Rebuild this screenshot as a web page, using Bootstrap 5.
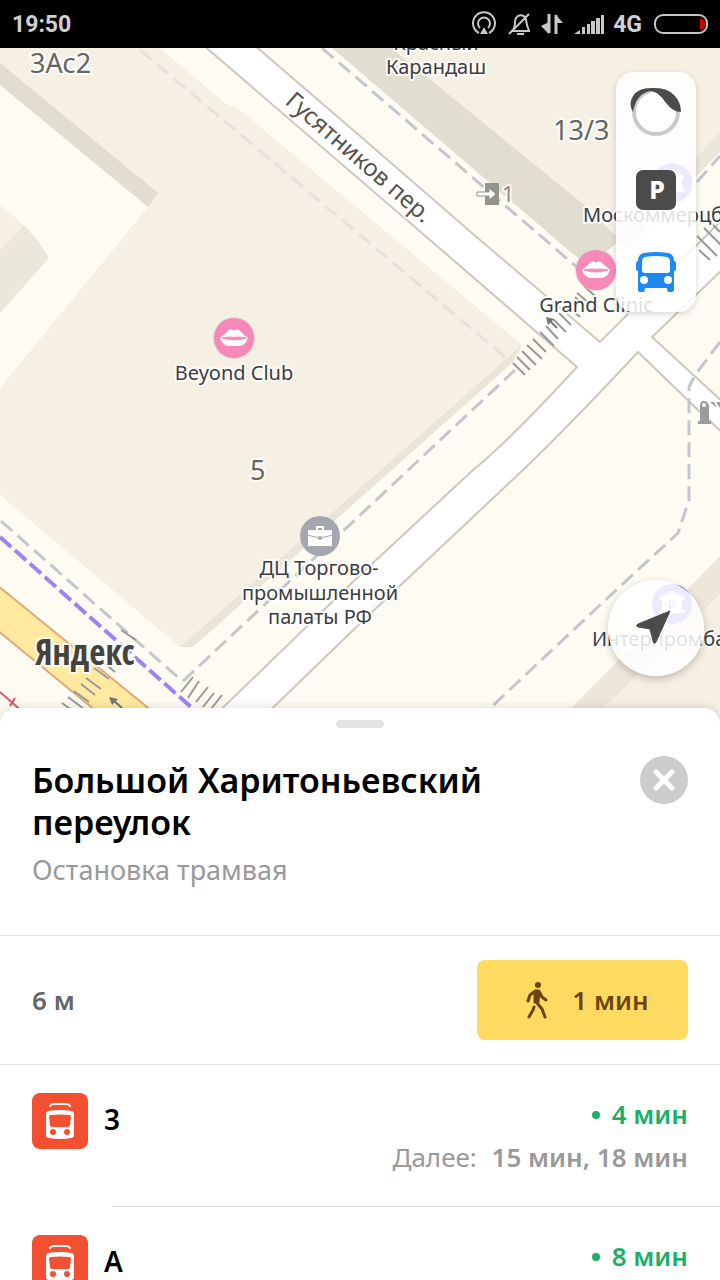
<!DOCTYPE html>
<html lang="ru">
<head>
<meta charset="utf-8">
<meta name="viewport" content="width=device-width, initial-scale=1">
<title>Остановка трамвая</title>
<link href="https://cdn.jsdelivr.net/npm/bootstrap@5.3.0/dist/css/bootstrap.min.css" rel="stylesheet">
<style>
body{font-family:"Noto Sans",sans-serif;background:#fff;color:#000}
.status-bar{height:48px;background:#000;color:#d0d0d0;font:700 23px/48px Roboto,sans-serif;padding:2px 10px 0 12px}
.map-view{background:#fefbf2}
.map-view>svg{display:block;width:100%;height:auto}
.map-label{font-family:"Noto Sans",sans-serif;fill:#3a3d42;paint-order:stroke;stroke:#fff;stroke-opacity:.85;stroke-width:4px;stroke-linejoin:round}
.poi-name{font-size:20px;text-anchor:middle}
.house-no{font-size:27px;fill:#66665f}
.street{font-size:24px;fill:#55544e}
.brand{font:35px "Liberation Sans Narrow","Open Sans Condensed","Noto Sans",sans-serif;fill:#45433f}
.layer-panel{top:24px;right:24px;width:80px;border-radius:18px;background:rgba(255,255,255,.84);box-shadow:0 2px 6px rgba(0,0,0,.16)}
.layer-panel .btn{height:80px;line-height:1}
.locate{right:16px;bottom:48px;width:96px;height:96px;background:rgba(255,255,255,.84);box-shadow:0 3px 8px rgba(0,0,0,.22)}
.sheet{margin-top:-16px;border-radius:16px 16px 0 0;background:#fff;box-shadow:0 -2px 8px rgba(0,0,0,.1)}
.handle{width:48px;height:8px;background:#e3e3e3;margin-top:12px}
.sheet-head{padding:31px 32px 38px}
.stop-name{font-size:34px;line-height:42px;font-weight:600}
.muted{color:#999}
.stop-kind{font-size:27px;line-height:54px}
.close-stop{width:48px;height:48px;background:#ccc;margin-top:-3px}
.line-top{border-top:1px solid #e2e2e2}
.walk-row{padding:24px 32px}
.dist{font-size:26px;font-weight:600;color:#666}
.walk-btn,.walk-btn:hover{width:211px;height:80px;border:0;border-radius:8px;background:#ffda60;color:#6b470f;font-size:26px;font-weight:600;gap:24px}
.route{padding:28px 0 0 32px;gap:16px}
.route svg{width:56px;height:56px}
.route-no{font-size:28px;font-weight:600;line-height:52px}
.route-no a{color:#000}
.times{font-size:26px;line-height:43px;padding-right:32px}
.soon{color:#1bb066;font-weight:600;gap:12px}
.live-dot{width:8px;height:8px;background:#1bb066}
.row-line{margin-left:112px}
.route-list .route{min-height:141px}
</style>
</head>
<body>
<div class="vh-100 d-flex flex-column overflow-hidden">
<header class="status-bar d-flex align-items-center justify-content-between flex-shrink-0">
  <time>19:50</time>
  <div class="d-flex align-items-center">
    <svg width="154" height="48" viewBox="460 1 154 48" fill="none" stroke="#c8c8c8" stroke-width="2" aria-hidden="true">
      <path d="M480 33a11 11 0 1 1 10 0M481 28a6 6 0 1 1 8 0" stroke-width="2"/><path d="M485 27l4 7h-8z" fill="#c8c8c8" stroke="none"/>
      <path d="M512 31h19M514 30c3-4 1-8 3-12 2-3 6-4 9-1 2 3 1 9 4 13M510 34l20-20M518 34h7"/>
      <path d="M550 14v19M557 34V15" stroke-width="3"/><path d="M542 26l8 8V22zM556 14l8 9h-8z" fill="#c8c8c8" stroke="none"/>
      <path d="M575 34l6-4v4zM583 27h3v7h-3zM588 24h3v10h-3zM592 21h4v13h-4zM597 18h4v16h-4zM602 15h3v19h-3z" fill="#c8c8c8" stroke="none"/>
    </svg>
    <span>4G</span>
    <svg class="ms-2" width="60" height="24" viewBox="0 1 60 24" aria-hidden="true"><rect x="5" y="3" width="52" height="18" rx="8" fill="none" stroke="#c4c4c4" stroke-width="2"/><path d="M50 6q5 1 5 6t-5 6z" fill="#d40000"/></svg>
  </div>
</header>

<main class="map-view position-relative flex-shrink-0">
  <svg viewBox="0 48 720 676" role="img" aria-label="Карта">
    <defs>
      <g id="lips"><circle r="21" fill="#d9d2c8" opacity=".7"/><circle r="20" fill="#f789b8"/><path d="M-14 0Q-9-4-5-8-2-10 0-7 2-10 5-8 9-4 14 0 11 8 5 8H-5Q-11 8-14 0z" fill="#fff"/><path d="M-12 0Q-6-1-3-1 0 0 3-1 6-1 12 0 5 2 0 2T-12 0z" fill="#f789b8" stroke="#f789b8"/></g>
      <g id="bank"><circle r="20" fill="#8f7cf0"/><path d="M-12-7L0-13 12-7v3H10V6h3v3h-26V6h3V-4h-2z" fill="#fff"/></g>
    </defs>
    <rect y="48" width="720" height="676" fill="#fefbf2"/>
    <!-- buildings -->
    <path d="M0 48H160L225 103 240 110 360 210 522 345 180 647 0 495V388L148 207 0 80z" fill="#f6efe4"/>
    <path d="M0 63L158 193 148 207 0 85z" fill="#e1ddd1"/>
    <path d="M522 345L513 362 193 647H180z" fill="#e9e5d9"/>
    <path d="M0 205L24 225 0 250z" fill="#f6efe4"/><path d="M24 225L37 240 49 258 0 313V250z" fill="#ebe7db"/>
    <path d="M393 48H720V132L618 240z" fill="#f6efe4"/>
    <path d="M332 48H393L400 55 583 204 620 240 590 266 573 254z" fill="#e1ddd1"/>
    <path d="M720 132L618 240 627 249 720 152z" fill="#ebe7db"/>
    <path d="M720 556L556 724H587L720 594z" fill="#eee6da"/><path d="M720 594L587 724H720z" fill="#f6efe4"/>
    <!-- streets -->
    <path d="M195 38L430 240 577 367Q510 440 473 470L360 575 206 724H256L372 612 523 470Q570 425 638 352L698 410 724 434V403L652 337 724 268V218L600 342 480 240 360 136 246 38z" fill="#fff" stroke="#cdc8bf" stroke-width="2"/>
    <path d="M-3 585L168 724H112L-3 630z" fill="#ffeaa0" stroke="#e3a876" stroke-width="2"/>
    <!-- footpaths -->
    <g fill="none" stroke-width="3">
      <path d="M140 50L505 357" stroke="#e3e3dc" stroke-dasharray="15 7"/>
      <g stroke="#c3c7cb" stroke-dasharray="15 7">
        <path d="M322 48L600 287M515 370L182 682M1 521L182 681M697 182L720 156"/>
        <path d="M720 342L695 375 689 387V500L678 533 600 605 470 727"/>
      </g>
      <path d="M0 537L210 724" stroke="#9c85f0" stroke-width="4" stroke-dasharray="15 5"/>
      <path d="M0 692L32 720M10 706L15 698" stroke="#d8586a" stroke-width="2"/>
    </g>
    <!-- pedestrian crossings -->
    <g stroke="#99999a" stroke-width="2">
      <path d="M513 363l12 12M517 357l13 13M522 351l14 14M527 345l15 14M533 339l13 13M540 332l14 14M546 326l12 13M553 319l13 13M559 313l12 12M566 305l14 12M575 297l12 11"/>
      <path d="M577 293l12 10M584 286l12 11M591 280l10 9"/>
      <path d="M697 236l20 20M704 228l18 18M699 250l11 10M710 222l10 10"/>
      <path d="M181 692l12-15M188 698l11-17M196 702l12-15M203 707l11-14M211 709l11-14"/>
      <path d="M62 703l15 11M68 697l16 12M74 691l15 11M81 684l14 11M86 678l15 11M94 668l15 11M103 662l12 10M121 630l15 10"/>
    </g>
    <path d="M557 328L549 320M122 708L113 700" stroke="#777" stroke-width="2"/><path d="M546 317l8 2-6 6zM109 697l9 2-6 6z" fill="#777"/>
    <!-- entrance and barrier marks -->
    <path d="M485 183h14v22h-14z" fill="#96928c"/><path d="M477 192h12v-4l7 6-7 6v-4h-12z" fill="#fff" stroke="#96928c"/>
    <path d="M698 424h13v-3h-2v-15q-1-5-5-5t-4 5v15h-2zM710 402h4l3 6zM716 402h4v6z" fill="#9b9ca0"/><circle cx="704" cy="405" r="2" fill="#fff"/>
    <use href="#lips" x="234" y="338"/><use href="#lips" x="596" y="270"/>
    <use href="#bank" x="672" y="183"/><use href="#bank" x="672" y="604"/>
    <text x="672" y="610" font-size="14" text-anchor="middle" fill="#8f7cf0">₽</text>
    <circle cx="320" cy="536" r="20" fill="#a4a7af"/>
    <path d="M308 530h8v-4h8v4h8v16h-24z" fill="#fff"/><path d="M318 530v-2h4v2z" fill="#a4a7af"/><path d="M308 535q12 5 24 0" fill="none" stroke="#a4a7af"/><circle cx="320" cy="538" r="2" fill="#a4a7af"/>
    <!-- names -->
    <g class="map-label">
      <text class="house-no" x="30" y="73">3Ас2</text><text class="house-no" x="553" y="140">13/3</text><text class="house-no" x="250" y="480">5</text>
      <text x="502" y="202" font-size="21" fill="#99857c">1</text>
      <text class="street" transform="translate(284 103) rotate(41)">Гусятников пер.</text>
      <g class="poi-name">
        <text x="436" y="50">Красный</text><text x="436" y="74">Карандаш</text>
        <text x="234" y="380">Beyond Club</text><text x="596" y="312">Grand Clinic</text>
        <text x="319" y="575">ДЦ Торгово-</text><text x="320" y="600">промышленной</text><text x="320" y="624">палаты РФ</text>
        <text x="583" y="222" style="text-anchor:start">Москоммерцбанк</text><text x="592" y="646" style="text-anchor:start">Интерпромбанк</text>
      </g>
      <text class="brand" x="35" y="665">Яндекс</text>
    </g>
  </svg>
  <div class="layer-panel position-absolute d-flex flex-column">
    <button class="btn border-0 p-0" aria-label="Пробки"><svg width="54" height="54" viewBox="1 1 54 54"><circle cx="28" cy="28" r="22" fill="#fff" stroke="#c9c9c9" stroke-width="4"/><path d="M5 28Q0 20 5 12 10 4 23 4 39 3 46 11 53 18 53 28 45 28 38 19 30 7 22 7 8 10 5 28z" fill="#4b4b4b"/></svg></button>
    <button class="btn border-0 p-0" aria-label="Парковки"><svg width="40" height="44" viewBox="0 0 40 44"><rect width="40" height="40" rx="7" fill="#4b4b4b"/><text x="21" y="29" text-anchor="middle" font-family="Noto Sans" font-size="25" font-weight="800" fill="#fff">P</text></svg></button>
    <button class="btn border-0 p-0" aria-label="Транспорт"><svg width="40" height="40" viewBox="0 0 40 40"><path d="M2 9Q2 2 8 1 20-1 32 1q6 1 6 8 2 0 2 3v5q0 2-2 2v19q0 2-2 2h-3q-2 0-2-4H9q0 4-2 4H4q-2 0-2-2V19q-2 0-2-2v-5q0-3 2-3z" fill="#1e88f5"/><path d="M9 5q11-2 22 0 3 1 3 5v8q0 3-3 3H9q-3 0-3-3v-8q0-4 3-5z" fill="#fff"/><circle cx="8" cy="28" r="4" fill="#fff"/><circle cx="32" cy="28" r="4" fill="#fff"/></svg></button>
  </div>
  <button class="locate btn border-0 p-0 rounded-circle position-absolute" aria-label="Моё местоположение"><svg width="40" height="40" viewBox="0 0 40 40"><path d="M34 3L20 34q-2 3-3-1l-3-12-12-2q-3-1 0-3z" fill="#4b4b4b" stroke="#4b4b4b" stroke-linejoin="round"/></svg></button>
</main>

<section class="sheet position-relative flex-grow-1">
  <div class="handle rounded-pill mx-auto"></div>
  <div class="sheet-head d-flex justify-content-between align-items-start">
    <div class="col-9">
      <h1 class="stop-name mb-0">Большой Харитоньевский переулок</h1>
      <p class="stop-kind muted mb-0">Остановка трамвая</p>
    </div>
    <button class="close-stop btn border-0 p-0 rounded-circle lh-1" aria-label="Закрыть"><svg width="24" height="24" viewBox="0 0 24 24"><path d="M4 4l16 16M20 4L4 20" stroke="#fff" stroke-width="5" stroke-linecap="round"/></svg></button>
  </div>
  <div class="walk-row line-top d-flex justify-content-between align-items-center">
    <span class="dist">6 м</span>
    <button class="walk-btn btn d-flex align-items-center justify-content-center p-0 ps-2">
      <svg width="24" height="38" viewBox="0 0 24 38" fill="none" stroke="#6b470f" stroke-linecap="round" stroke-linejoin="round"><circle cx="14" cy="4" r="3" fill="#6b470f" stroke="none"/><path d="M11 10h4l-1 11h-3z" fill="#6b470f" stroke-width="3"/><path d="M10 11l-4 3-2 6M16 12l2 4 4 3" stroke-width="3"/><path d="M13 22l5 6 3 8M10 26l-1 3-4 7" stroke-width="3"/></svg>
      <span>1 мин</span>
    </button>
  </div>
  <svg class="d-none"><symbol id="tram" viewBox="0 0 56 56"><rect width="56" height="56" rx="8" fill="#f25030"/><path d="M18 13q1-2 4-2h12q3 0 4 2" fill="none" stroke="#fff" stroke-width="2" stroke-linecap="round"/><path d="M14 21q0-2 2-3 12-2 24 0 2 1 2 3v21q0 3-3 3-11 2-22 0-3 0-3-3z" fill="#fff"/><path d="M17 24q0-2 2-2 9-1 18 0 2 0 2 2l-1 8q0 2-3 2H21q-3 0-3-2z" fill="#f25030"/><circle cx="21" cy="39" r="3" fill="#f25030"/><circle cx="35" cy="39" r="3" fill="#f25030"/></symbol></svg>
  <ul class="route-list list-unstyled mb-0 line-top">
    <li class="route d-flex align-items-start"><svg aria-hidden="true"><use href="#tram"/></svg>
      <span class="route-no"><a href="#r3" class="text-decoration-none">3</a></span>
      <div class="times ms-auto text-end"><div class="soon d-flex align-items-center justify-content-end"><span class="live-dot rounded-circle"></span>4 мин</div><div class="muted">Далее: <span class="fw-semibold ms-2">15 мин, 18 мин</span></div></div></li>
    <li class="row-line line-top"></li>
    <li class="route d-flex align-items-start"><svg aria-hidden="true"><use href="#tram"/></svg>
      <span class="route-no"><a href="#ra" class="text-decoration-none">А</a></span>
      <div class="times ms-auto text-end"><div class="soon d-flex align-items-center justify-content-end"><span class="live-dot rounded-circle"></span>8 мин</div></div></li>
  </ul>
</section>
</div>
<script src="https://cdn.jsdelivr.net/npm/bootstrap@5.3.0/dist/js/bootstrap.bundle.min.js"></script>
</body>
</html>
